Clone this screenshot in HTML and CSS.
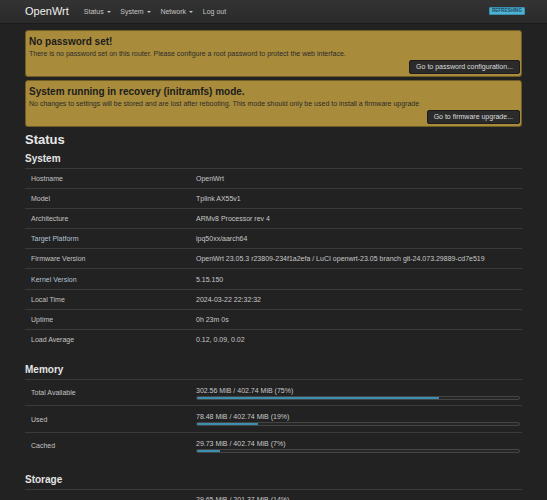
FILE: index.html
```html
<!DOCTYPE html>
<html>
<head>
<meta charset="utf-8">
<title>OpenWrt - Status</title>
<link rel="stylesheet" href="styles.css">
</head>
<body>
<header class="topbar">
  <div class="topbar-inner">
    <span class="brand">OpenWrt</span>
    <nav class="nav">
      <span class="nav-item">Status<i class="caret"></i></span>
      <span class="nav-item">System<i class="caret"></i></span>
      <span class="nav-item">Network<i class="caret"></i></span>
      <span class="nav-item">Log out</span>
    </nav>
    <span class="badge">Refreshing</span>
  </div>
</header>
<main class="container">
  <div class="alert">
    <h4 class="alert-title">No password set!</h4>
    <p class="alert-text">There is no password set on this router. Please configure a root password to protect the web interface.</p>
    <div class="alert-actions"><span class="btn">Go to password configuration...</span></div>
  </div>
  <div class="alert">
    <h4 class="alert-title">System running in recovery (initramfs) mode.</h4>
    <p class="alert-text">No changes to settings will be stored and are lost after rebooting. This mode should only be used to install a firmware upgrade</p>
    <div class="alert-actions"><span class="btn">Go to firmware upgrade...</span></div>
  </div>

  <h2 class="page-title">Status</h2>

  <h3 class="section-title">System</h3>
  <div class="table">
    <div class="tr"><div class="td label">Hostname</div><div class="td">OpenWrt</div></div>
    <div class="tr"><div class="td label">Model</div><div class="td">Tplink AX55v1</div></div>
    <div class="tr"><div class="td label">Architecture</div><div class="td">ARMv8 Processor rev 4</div></div>
    <div class="tr"><div class="td label link">Target Platform</div><div class="td">ipq50xx/aarch64</div></div>
    <div class="tr"><div class="td label">Firmware Version</div><div class="td">OpenWrt 23.05.3 r23809-234f1a2efa / LuCI openwrt-23.05 branch git-24.073.29889-cd7e519</div></div>
    <div class="tr"><div class="td label link">Kernel Version</div><div class="td">5.15.150</div></div>
    <div class="tr"><div class="td label">Local Time</div><div class="td">2024-03-22 22:32:32</div></div>
    <div class="tr"><div class="td label">Uptime</div><div class="td">0h 23m 0s</div></div>
    <div class="tr"><div class="td label">Load Average</div><div class="td">0.12, 0.09, 0.02</div></div>
  </div>

  <h3 class="section-title section-gap">Memory</h3>
  <div class="table">
    <div class="tr tall"><div class="td label">Total Available</div><div class="td"><div class="bar-text">302.56 MiB / 402.74 MiB (75%)</div><div class="bar"><div class="fill" style="width:75%"></div></div></div></div>
    <div class="tr tall"><div class="td label">Used</div><div class="td"><div class="bar-text">78.48 MiB / 402.74 MiB (19%)</div><div class="bar"><div class="fill" style="width:19%"></div></div></div></div>
    <div class="tr tall"><div class="td label">Cached</div><div class="td"><div class="bar-text">29.73 MiB / 402.74 MiB (7%)</div><div class="bar"><div class="fill" style="width:7%"></div></div></div></div>
  </div>

  <h3 class="section-title section-gap">Storage</h3>
  <div class="table">
    <div class="tr tall"><div class="td label">Disk space</div><div class="td"><div class="bar-text">29.65 MiB / 201.37 MiB (14%)</div><div class="bar"><div class="fill" style="width:14%"></div></div></div></div>
  </div>
</main>
</body>
</html>
```

FILE: styles.css
```css
* { box-sizing: border-box; }

html, body {
  margin: 0;
  padding: 0;
  background: #222222;
  color: #c8c8c8;
  font-family: "Liberation Sans", Arial, sans-serif;
  font-size: 7px;
}

.topbar {
  height: 24px;
  background: linear-gradient(#333333, #2a2a2a);
  border-bottom: 1px solid #1b1b1b;
}

.topbar-inner {
  display: flex;
  align-items: center;
  height: 100%;
  padding: 0 22px 0 25px;
}

.brand {
  color: #f0f0f0;
  font-size: 11px;
  margin-right: 15px;
  line-height: 1;
}

.nav {
  display: flex;
  gap: 9.7px;
  flex: 1;
}

.nav-item {
  color: #c4c4c4;
  font-size: 7px;
  display: inline-flex;
  align-items: center;
}

.caret {
  display: inline-block;
  margin-left: 3px;
  border-left: 2px solid transparent;
  border-right: 2px solid transparent;
  border-top: 2px solid #c4c4c4;
}

.badge {
  background: #4fb2d4;
  border: 1px solid #3a8fae;
  color: #1b4a60;
  font-size: 4.6px;
  font-weight: bold;
  text-transform: uppercase;
  padding: 0 2px;
  height: 8px;
  line-height: 6px;
  border-radius: 1px;
  margin-top: -1px;
}

.container {
  padding: 0 25px;
}

.alert {
  background: #a88b3b;
  border: 1px solid #6f5b24;
  border-radius: 3px;
  padding: 5px 1px 2px 3px;
  margin-top: 3px;
  color: #262626;
}

.alert:first-child {
  margin-top: 6px;
}

.alert-title {
  margin: 0;
  font-size: 10px;
  line-height: 12px;
  font-weight: bold;
  color: #1c1c1c;
}

.alert-text {
  margin: 1px 0 0;
  font-size: 7px;
  line-height: 9px;
  color: #2b2b2b;
}

.alert-actions {
  display: flex;
  justify-content: flex-end;
  margin-top: 2px;
}

.btn {
  display: inline-block;
  background: #2b2b2b;
  border: 1px solid #1c1c1c;
  border-radius: 2px;
  color: #dddddd;
  font-size: 7px;
  height: 14px;
  line-height: 12px;
  padding: 0 6px;
}

.page-title {
  margin: 5px 0 0;
  font-size: 13px;
  line-height: 16px;
  font-weight: bold;
  color: #e8e8e8;
}

.section-title {
  margin: 5px 0 3px;
  font-size: 10px;
  line-height: 12px;
  font-weight: bold;
  color: #e4e4e4;
}

.section-gap {
  margin-top: 15px;
}

.table {
  display: flex;
  flex-direction: column;
}

.tr {
  display: grid;
  grid-template-columns: 165px 1fr;
  border-top: 1px solid #3a3a3a;
  height: 20.1px;
  align-items: center;
}

.tr.tall {
  height: 26.6px;
}

.td {
  padding: 0 2px 0 6px;
  line-height: 9px;
  color: #c8c8c8;
  white-space: nowrap;
}

.td.label {
  color: #c2c2c2;
}

.td.link {
  color: #b3c3d3;
}

.bar-text {
  line-height: 9px;
}

.bar {
  height: 4px;
  margin-top: 1px;
  border: 1px solid #454545;
  border-radius: 2px;
  background: #262626;
  overflow: hidden;
}

.fill {
  height: 100%;
  background: #3d8fb0;
}
```
